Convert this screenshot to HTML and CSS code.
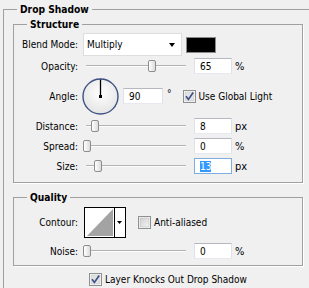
FILE: index.html
```html
<!DOCTYPE html>
<html lang="en">
<head>
    <meta charset="UTF-8">
    <title>Drop Shadow</title>
    <link rel="stylesheet" href="styles.css">
</head>
<body>
    <fieldset class="group">
        <legend class="group-title">Drop Shadow</legend>

        <fieldset class="box box-structure">
            <legend class="box-title">Structure</legend>

            <div class="row row-blend">
                <span class="label">Blend Mode:</span>
                <div class="select">
                    <span>Multiply</span>
                    <span class="select-arrow"></span>
                </div>
                <span class="swatch"></span>
            </div>

            <div class="row">
                <span class="label">Opacity:</span>
                <div class="slider"><span class="track"></span><span class="thumb" style="left: 65px"></span></div>
                <span class="field">65</span>
                <span class="unit">%</span>
            </div>

            <div class="row row-angle">
                <span class="label">Angle:</span>
                <svg class="dial" width="37" height="37" viewBox="0 0 37 37">
                    <defs>
                        <radialGradient id="dialFill" cx="50%" cy="40%" r="60%">
                            <stop offset="0" stop-color="#ffffff"/>
                            <stop offset="1" stop-color="#e4e4e4"/>
                        </radialGradient>
                    </defs>
                    <circle cx="18.5" cy="18.5" r="17.5" fill="url(#dialFill)" stroke="#3f5184" stroke-width="1.4"/>
                    <line x1="18.5" y1="18.5" x2="18.5" y2="1.5" stroke="#000" stroke-width="1.3"/>
                    <rect x="17" y="17" width="3" height="3" fill="#000"/>
                </svg>
                <span class="field field-angle">90</span>
                <span class="degree">°</span>
                <label class="check check-global">
                    <svg width="13" height="13" viewBox="0 0 13 13">
                        <rect x="0.5" y="0.5" width="12" height="12" fill="#fff" stroke="#8e8f8f"/>
                        <rect x="2" y="2" width="9" height="9" fill="#e2e2e2" stroke="#c6c6c6" stroke-width="0.6"/>
                        <path d="M3 6.2 L5.4 9.4 L10.2 2.6" fill="none" stroke="#3d4f88" stroke-width="1.7"/>
                    </svg>
                    <span>Use Global Light</span>
                </label>
            </div>

            <div class="row">
                <span class="label">Distance:</span>
                <div class="slider"><span class="track"></span><span class="thumb" style="left: 8px"></span></div>
                <span class="field">8</span>
                <span class="unit">px</span>
            </div>

            <div class="row">
                <span class="label">Spread:</span>
                <div class="slider"><span class="track"></span><span class="thumb" style="left: 0px"></span></div>
                <span class="field">0</span>
                <span class="unit">%</span>
            </div>

            <div class="row">
                <span class="label">Size:</span>
                <div class="slider"><span class="track"></span><span class="thumb" style="left: 11px"></span></div>
                <span class="field field-focus"><span class="selected">13</span></span>
                <span class="unit">px</span>
            </div>
        </fieldset>

        <fieldset class="box box-quality">
            <legend class="box-title">Quality</legend>

            <div class="row row-contour">
                <span class="label">Contour:</span>
                <svg class="contour" width="42" height="31" viewBox="0 0 42 31">
                    <rect x="0.5" y="0.5" width="41" height="30" fill="#fff" stroke="#000"/>
                    <polygon points="3,29 29,2 29,29" fill="#a3a3a3"/>
                    <line x1="30.5" y1="1" x2="30.5" y2="30" stroke="#000"/>
                    <polygon points="33,14 38,14 35.5,17" fill="#000"/>
                </svg>
                <label class="check check-anti">
                    <svg width="13" height="13" viewBox="0 0 13 13">
                        <defs>
                            <linearGradient id="boxFill" x1="0" y1="0" x2="1" y2="1">
                                <stop offset="0" stop-color="#cfcfcf"/>
                                <stop offset="1" stop-color="#f4f4f4"/>
                            </linearGradient>
                        </defs>
                        <rect x="0.5" y="0.5" width="12" height="12" fill="#fff" stroke="#8e8f8f"/>
                        <rect x="2" y="2" width="9" height="9" fill="url(#boxFill)" stroke="#b9b9b9" stroke-width="0.6"/>
                    </svg>
                    <span>Anti-aliased</span>
                </label>
            </div>

            <div class="row">
                <span class="label">Noise:</span>
                <div class="slider"><span class="track"></span><span class="thumb" style="left: 0px"></span></div>
                <span class="field">0</span>
                <span class="unit">%</span>
            </div>
        </fieldset>

        <label class="check check-knock">
            <svg width="13" height="13" viewBox="0 0 13 13">
                <rect x="0.5" y="0.5" width="12" height="12" fill="#fff" stroke="#8e8f8f"/>
                <rect x="2" y="2" width="9" height="9" fill="#e2e2e2" stroke="#c6c6c6" stroke-width="0.6"/>
                <path d="M3 6.2 L5.4 9.4 L10.2 2.6" fill="none" stroke="#3d4f88" stroke-width="1.7"/>
            </svg>
            <span>Layer Knocks Out Drop Shadow</span>
        </label>
    </fieldset>
</body>
</html>
```

FILE: styles.css
```css
body {
    margin: 0;
    background-color: #f0f0f0;
    font-family: "DejaVu Sans Condensed", "Liberation Sans", sans-serif;
    font-size: 10px;
    line-height: 13px;
    color: #000;
    overflow: hidden;
}

/* etched group frames */
.group {
    margin: 3px 0 0 3px;
    padding: 2px 6px 8px 9px;
    border: 1px solid #a0a0a0;
    border-right: 0;
    border-bottom: 0;
    min-width: 0;
}

.group-title,
.box-title {
    font-weight: bold;
    font-size: 10.2px;
    padding: 0 3px;
    line-height: 13px;
}

.group-title {
    margin-left: 4px;
}

.box {
    margin: 0;
    padding: 0 0 6px 0;
    border: 1px solid #a0a0a0;
    box-shadow: 1px 1px 0 #fff;
    min-width: 0;
}

.box-title {
    margin-left: 13px;
}

.box-quality {
    margin-top: 8px;
    padding-bottom: 4px;
}

/* rows */
.row {
    display: flex;
    align-items: center;
    height: 20px;
}

.row-blend {
    height: 23px;
    margin-top: 2px;
}

.row-angle {
    height: 40px;
}

.row-contour {
    height: 32px;
    margin-top: 2px;
    margin-bottom: 3px;
}

.label {
    width: 64px;
    margin-right: 5px;
    text-align: right;
}

/* blend mode dropdown */
.select {
    display: flex;
    align-items: center;
    justify-content: space-between;
    box-sizing: border-box;
    width: 99px;
    height: 23px;
    padding: 0 6px 0 3px;
    background-color: #fff;
    border: 1px solid #dedede;
}

.select-arrow {
    width: 0;
    height: 0;
    border-left: 3.5px solid transparent;
    border-right: 3.5px solid transparent;
    border-top: 4px solid #000;
}

.swatch {
    width: 28px;
    height: 14px;
    margin-left: 4px;
    background-color: #000;
    border: 1px solid #8a8a8a;
}

/* sliders */
.slider {
    position: relative;
    width: 106px;
    height: 14px;
}

.track {
    display: block;
    margin: 6px 3px 0;
    height: 1px;
    background-color: #b2b2b2;
    border-bottom: 1px solid #fdfdfd;
}

.thumb {
    position: absolute;
    top: 1px;
    box-sizing: border-box;
    width: 8px;
    height: 12px;
    border: 1px solid #8d8d8d;
    border-radius: 2px;
    background: linear-gradient(to right, #ffffff, #dcdcdc);
}

/* numeric fields */
.field {
    box-sizing: border-box;
    width: 38px;
    height: 16px;
    margin-left: 5px;
    padding: 1px 0 0 5px;
    background-color: #fff;
    border: 1px solid;
    border-color: #b5b8c0 #dfe3e9 #e6eaf0 #dfe3e9;
}

.field-focus {
    border-color: #7eaee0;
}

.selected {
    background-color: #3399ff;
    color: #fff;
}

.unit {
    margin-left: 3px;
    font-size: 11px;
}

/* angle */
.dial {
    margin-left: -1px;
}

.field-angle {
    width: 40px;
    margin-left: 4px;
}

.degree {
    align-self: flex-start;
    margin: 11px 0 0 4px;
}

/* checkboxes */
.check {
    display: flex;
    align-items: center;
}

.check svg {
    margin-right: 3px;
}

.check-global {
    margin-left: 11px;
}

.contour {
    margin-left: 1px;
}

.check-anti {
    margin-left: 12px;
}

.check-knock {
    height: 18px;
    margin-top: 4px;
    padding-left: 76px;
}
```
